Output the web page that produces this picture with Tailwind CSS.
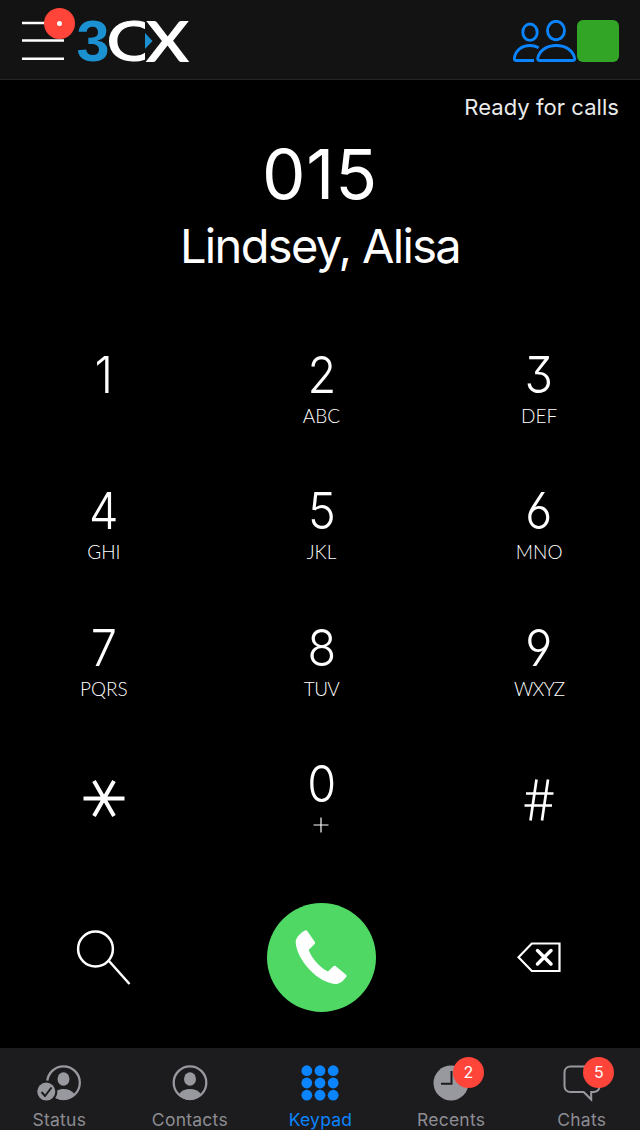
<!DOCTYPE html>
<html lang="en">
<head>
    <meta charset="UTF-8">
    <meta name="viewport" content="width=device-width, initial-scale=1.0">
    <script src="https://cdn.jsdelivr.net/npm/@tailwindcss/browser@4"></script>
    <title>3CX Keypad</title>
</head>
<body class="bg-black text-white font-['Inter',sans-serif]">
    <div class="w-[640px] h-[1130px] flex flex-col overflow-hidden">
        <!-- Header -->
        <header class="h-20 shrink-0 bg-[#131313] border-b border-[#252525] flex items-start justify-between pl-[22px] pr-[21px]">
            <div class="flex items-start">
                <button class="relative w-[42px] h-[62px]" aria-label="Menu">
                    <svg class="w-[42px] h-[62px]" viewBox="0 0 42 62" stroke="#fff" stroke-width="2.4">
                        <path d="M0 23h42M0 40.5h42M0 58.8h42"/>
                    </svg>
                    <span class="absolute left-[22px] top-[8px] size-[31px] rounded-full bg-[#ff453a] flex items-center justify-center">
                        <span class="size-[5px] rounded-full bg-white"></span>
                    </span>
                </button>
                <svg class="w-[119px] h-[79px] ml-[10px] overflow-visible" viewBox="74 0 119 79" role="img" aria-label="3CX">
                    <text x="76.5" y="61" font-family="Liberation Sans" font-weight="700" font-size="57" fill="#1b91d1" textLength="33" lengthAdjust="spacingAndGlyphs">3</text>
                    <text x="106.5" y="61" font-family="Lato" font-weight="400" font-size="56" fill="#fff" stroke="#fff" stroke-width="1.2" textLength="46" lengthAdjust="spacingAndGlyphs">C</text>
                    <path d="M145 15h12v52h-12z" fill="#131313"/>
                    <path d="M145 33l7.5 8-7.5 8z" fill="#1b91d1"/>
                    <text x="147" y="60.5" font-family="Lato" font-weight="400" font-size="54.5" fill="#fff" stroke="#fff" stroke-width="1.8" textLength="41" lengthAdjust="spacingAndGlyphs">X</text>
                </svg>
            </div>
            <div class="flex items-start pt-5">
                <svg class="w-[64px] h-[43px]" viewBox="513 20 64 43" fill="none" stroke="#0a84ff" stroke-width="2.9">
                    <ellipse cx="530" cy="32.2" rx="7.2" ry="8.2"/>
                    <ellipse cx="556" cy="30.5" rx="8.5" ry="9.2"/>
                    <path d="M534 60.500H516c-1.500 0-1.800-1-1.600-2.500 1.100-7.500 7.500-12.500 15.500-12.500 3.500 0 6 .8 8.800 2.300"/>
                    <path d="M539.500 60.500h33.500c1.500 0 2-1 1.600-2.500-1.600-7.500-8.800-12.500-18.400-12.500s-16.800 5-18.400 12.500c-.3 1.500.2 2.500 1.700 2.500z"/>
                </svg>
                <span class="size-[42px] rounded-[6px] bg-[#33a526]"></span>
            </div>
        </header>

        <p class="text-right text-[22px] leading-[30px] tracking-[0.05px] text-[#ebebeb] pr-[21px] pt-[12px]">Ready for calls</p>

        <div class="flex flex-col items-center">
            <h1 class="text-[69px] leading-[80px] tracking-[0.8px] mt-[12px]">015</h1>
            <h2 class="text-[47px] leading-[60px] tracking-[-1.65px] mt-[2px]">Lindsey, Alisa</h2>
        </div>

        <!-- Keypad -->
        <main class="w-[653px] -ml-[5px] mt-[65px] grid grid-cols-3 auto-rows-[136.3px] text-center [&_b]:block [&_b]:h-[60px] [&_b]:text-[51px] [&_b]:leading-[68px] [&_b]:font-light [&_b]:scale-x-92 [&_b]:[font-feature-settings:'cv03','cv04','cv09'] [&_i]:block [&_i]:not-italic [&_i]:font-['Lato'] [&_i]:font-light [&_i]:text-[19px] [&_i]:leading-[24px] [&_i]:mt-[3px]">
            <div><b>1</b></div>
            <div><b>2</b><i>ABC</i></div>
            <div><b>3</b><i>DEF</i></div>
            <div><b>4</b><i>GHI</i></div>
            <div><b>5</b><i>JKL</i></div>
            <div><b>6</b><i>MNO</i></div>
            <div><b>7</b><i>PQRS</i></div>
            <div><b>8</b><i class="tracking-[-0.6px]">TUV</i></div>
            <div><b>9</b><i class="tracking-[-0.9px]">WXYZ</i></div>
            <div class="flex justify-center pt-[29px]">
                <svg class="w-[42px] h-[38px]" viewBox="0 0 42 38" stroke="#fff" stroke-width="4"><path d="M.5 19.500h41M11 2l20 35M31 2L11 37"/></svg>
            </div>
            <div><b>0</b>
                <svg class="w-[16px] h-[16px] mx-auto mt-[7px]" viewBox="0 0 16 16" stroke="#fff" stroke-width="1.200"><path d="M.5 8h15M8 .5v15"/></svg>
            </div>
            <div class="flex justify-center pt-[29px]">
                <svg class="w-[30px] h-[42px]" viewBox="0 0 30 42" stroke="#fff" stroke-width="2.700"><path d="M2 14.500h27.500M.5 26.500H28M12.500.5L6.500 41.500M24 .5L18 41.500"/></svg>
            </div>
        </main>

        <!-- Call actions -->
        <div class="w-[653px] -ml-[5px] mt-[17px] grid grid-cols-3 justify-items-center items-center h-[109px]">
            <svg class="w-[56px] h-[56px]" viewBox="76 930 56 56" fill="none" stroke="#fff" stroke-width="2.500"><circle cx="95.500" cy="949" r="17.400"/><path d="M109 961l20.500 23"/></svg>
            <button class="size-[109px] rounded-full bg-[#4fd964]" aria-label="Call">
                <svg class="size-[109px]" viewBox="0 0 109 109">
                    <path d="M38 27.500c1-.6 1.800-.2 2.400.7l7.300 10.500c.6 1 .5 1.800-.3 2.600l-5.800 5.600c3.600 8.800 10.600 16.600 19.400 21.700l5.400-5.300c.7-.7 1.500-.8 2.400-.1l9.900 8.200c1 .8 1.200 1.600.4 2.600-2.700 3.500-5.600 6.800-10 7-8.300-.3-18.700-5.800-26.700-14.500-7.700-8.300-13.100-18.500-13.700-26.800-.2-5 4.500-9.500 9.300-12.200z" fill="#fff"/>
                </svg>
            </button>
            <svg class="w-[44px] h-[31px]" viewBox="0 0 44 31" fill="none" stroke="#fff" stroke-width="2.200"><path d="M14.800 1.500H42.500v27.500H14.800L1.500 15.200z"/><path d="M20.500 8.500l13.500 13.500M34 8.500L20.500 22" stroke-width="3.500" stroke-linecap="round"/></svg>
        </div>

        <!-- Tab bar -->
        <nav class="w-full h-[82px] mt-auto shrink-0 bg-[#1c1c1e] text-[#98989f]">
            <div class="w-[653px] -ml-[6px] grid grid-cols-5 text-center text-[17.5px] leading-[24px] tracking-[0.25px] [&>a]:h-[82px] [&>a]:pt-[16px] [&>a]:text-[#8d8d93] [&_svg]:mx-auto [&_svg]:h-[38px] [&_svg]:mb-[6px]">
                <a>
                    <svg class="w-[46px]" viewBox="36 1064 46 38" fill="none">
                        <circle cx="63.500" cy="1082.700" r="16.300" stroke="#98989f" stroke-width="2.300"/>
                        <ellipse cx="63.500" cy="1079" rx="6" ry="6.700" fill="#98989f"/>
                        <path d="M53 1095c2-4 6-6 10.500-6s8.500 1.800 11.500 5.500c-3 3.500-7 5.500-11.500 5.500s-8-1.500-10.500-5z" fill="#98989f"/>
                        <circle cx="46.300" cy="1091.600" r="11" fill="#1c1c1e"/>
                        <circle cx="46.300" cy="1091.600" r="9" fill="#98989f"/>
                        <path d="M41.500 1092l3.500 4 6.500-8.500" stroke="#1c1c1e" stroke-width="2"/>
                    </svg>Status
                </a>
                <a>
                    <svg class="w-[36px]" viewBox="172 1064 36 38" fill="none">
                        <circle cx="190" cy="1082.700" r="16.300" stroke="#98989f" stroke-width="2.300"/>
                        <ellipse cx="190" cy="1079" rx="6" ry="6.700" fill="#98989f"/>
                        <path d="M178.500 1094.500c3-3.700 7-5.500 11.500-5.500s8.500 1.800 11.500 5.500c-3 3.500-7 5.500-11.500 5.500s-8.500-2-11.500-5.500z" fill="#98989f"/>
                    </svg>Contacts
                </a>
                <a class="text-[#0a84ff]!">
                    <svg class="w-[38px]" viewBox="301.500 1064 38 38" fill="#0a84ff">
                        <circle cx="307.300" cy="1070.700" r="5.400"/><circle cx="320.500" cy="1070.700" r="5.400"/><circle cx="333.700" cy="1070.700" r="5.400"/>
                        <circle cx="307.300" cy="1083" r="5.400"/><circle cx="320.500" cy="1083" r="5.400"/><circle cx="333.700" cy="1083" r="5.400"/>
                        <circle cx="307.300" cy="1095.200" r="5.400"/><circle cx="320.500" cy="1095.200" r="5.400"/><circle cx="333.700" cy="1095.200" r="5.400"/>
                    </svg>Keypad
                </a>
                <a class="relative">
                    <svg class="w-[36px]" viewBox="433 1064 36 38" fill="none">
                        <circle cx="451" cy="1083" r="17.500" fill="#98989f"/>
                        <path d="M451.500 1071v12.700H441" stroke="#1c1c1e" stroke-width="2"/>
                    </svg>Recents
                    <span class="absolute left-[67px] top-[9px] size-[31px] rounded-full bg-[#ff453a] text-white text-[16px] leading-[31px] tracking-normal">2</span>
                </a>
                <a class="relative">
                    <svg class="w-[38px]" viewBox="562.500 1064 38 38" fill="none" stroke="#98989f" stroke-width="2">
                        <path d="M570 1066.500h23c3.500 0 6 2.500 6 6v13.500c0 3.500-2 5.500-5.500 6h-2.800v7.500l-7.500-7.500H570c-3.500 0-6-2.500-6-6v-13.500c0-3.500 2.500-6 6-6z"/>
                    </svg>Chats
                    <span class="absolute left-[67px] top-[9px] size-[31px] rounded-full bg-[#ff453a] text-white text-[16px] leading-[31px] tracking-normal">5</span>
                </a>
            </div>
        </nav>
    </div>
</body>
</html>
